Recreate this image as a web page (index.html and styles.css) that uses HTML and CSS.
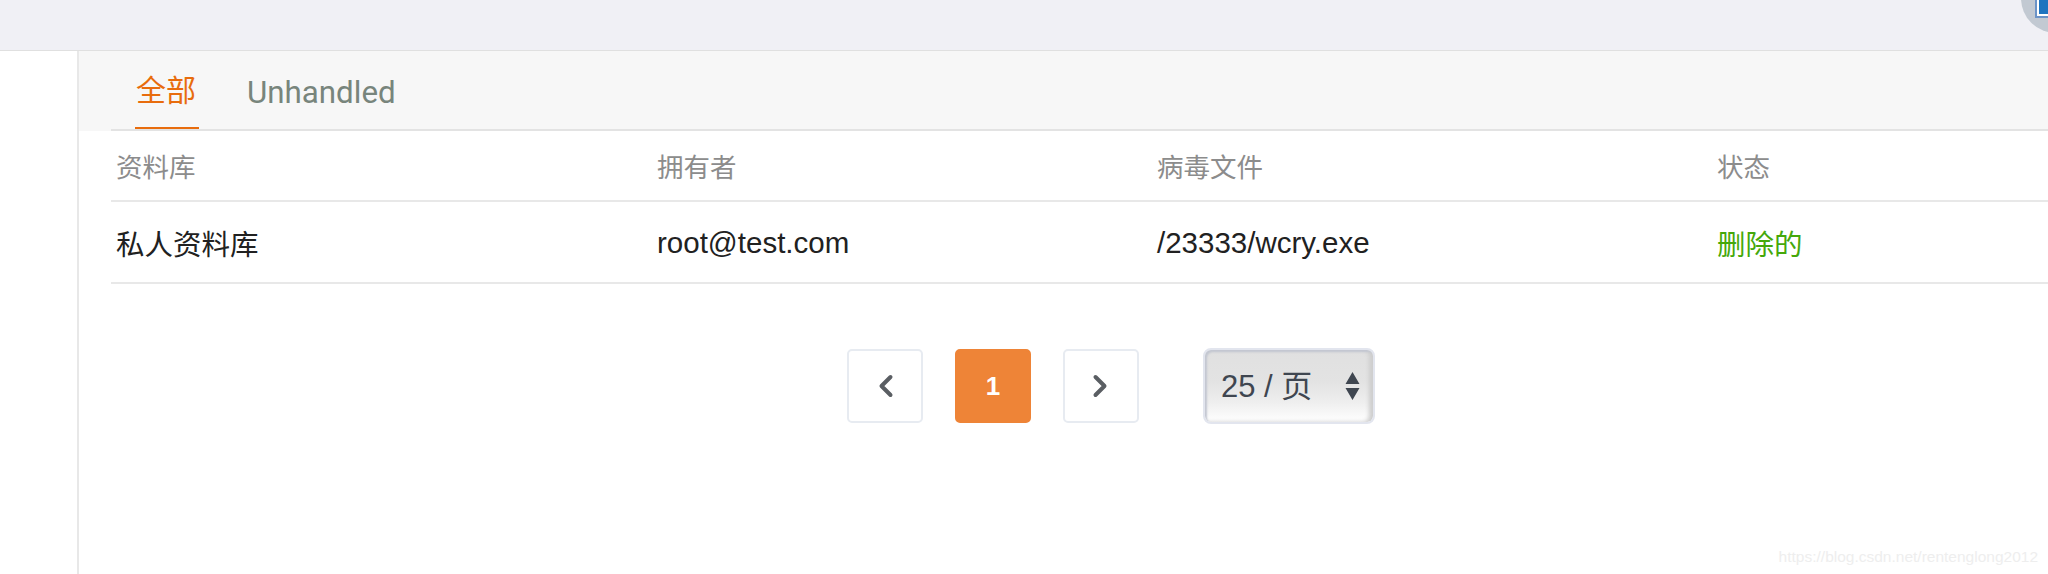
FILE: index.html
```html
<!DOCTYPE html>
<html lang="zh-CN">
<head>
    <meta charset="UTF-8">
    <meta name="viewport" content="width=device-width, initial-scale=1.0">
    <title>病毒扫描</title>
    <link rel="stylesheet" href="styles.css">
</head>
<body>
    <header class="top-bar">
        <div class="avatar"><span class="avatar-img"></span></div>
    </header>
    <div class="layout">
        <aside class="side-panel"></aside>
        <main class="content">
            <nav class="tabs">
                <a class="tab tab-active">全部</a>
                <a class="tab">Unhandled</a>
            </nav>
            <div class="table-wrap">
                <div class="table-row table-head">
                    <div>资料库</div>
                    <div>拥有者</div>
                    <div>病毒文件</div>
                    <div>状态</div>
                </div>
                <div class="table-row table-body">
                    <div class="cell-cjk">私人资料库</div>
                    <div class="cell-latin">root@test.com</div>
                    <div class="cell-latin">/23333/wcry.exe</div>
                    <div class="cell-cjk status-deleted">删除的</div>
                </div>
            </div>
            <div class="pager">
                <button class="page-btn">
                    <svg width="18" height="24" viewBox="0 0 18 24"><path d="M14.5 3 L5.5 12 L14.5 21" fill="none" stroke="#5a5e63" stroke-width="4" stroke-linecap="round" stroke-linejoin="round"/></svg>
                </button>
                <button class="page-btn page-current">1</button>
                <button class="page-btn">
                    <svg width="18" height="24" viewBox="0 0 18 24"><path d="M3.5 3 L12.5 12 L3.5 21" fill="none" stroke="#5a5e63" stroke-width="4" stroke-linecap="round" stroke-linejoin="round"/></svg>
                </button>
                <div class="per-page">
                    <span class="per-page-label">25 / 页</span>
                    <svg class="per-page-arrows" width="15" height="28" viewBox="0 0 15 28"><path d="M7.5 0 L14.5 12 H0.5 Z M0.5 16 H14.5 L7.5 28 Z" fill="#3f4650"/></svg>
                </div>
            </div>
            <div class="watermark">https://blog.csdn.net/rentenglong2012</div>
        </main>
    </div>
</body>
</html>
```

FILE: styles.css
```css
html, body {
    height: 100%;
}
body {
    margin: 0;
    height: 574px;
    overflow: hidden;
    background-color: #ffffff;
    font-family: "Liberation Sans", "Noto Sans CJK SC", sans-serif;
    color: #212529;
}
.top-bar {
    position: relative;
    height: 50px;
    background-color: #f0f0f5;
    border-bottom: 1px solid #e0e0e0;
    overflow: hidden;
}
.avatar {
    position: absolute;
    top: -37px;
    left: 2021px;
    width: 70px;
    height: 70px;
    border-radius: 50%;
    background-color: #c2c9d2;
}
.avatar-img {
    position: absolute;
    top: 0;
    left: 16px;
    width: 40px;
    height: 53px;
    box-sizing: border-box;
    background-color: #1f74bf;
    border: 2px solid #ffffff;
    outline: 2px solid #6b93c7;
}
.layout {
    display: flex;
    height: 523px;
}
.side-panel {
    width: 77px;
    flex-shrink: 0;
    border-right: 2px solid #e8e8e8;
}
.content {
    position: relative;
    flex: 1;
    min-width: 0;
}
.tabs {
    display: flex;
    box-sizing: border-box;
    height: 80px;
    padding-left: 56px;
    gap: 48px;
    background-color: #f7f7f7;
}
.tab {
    box-sizing: border-box;
    height: 78px;
    padding-top: 23px;
    font-family: Roboto, "Noto Sans CJK SC", sans-serif;
    font-size: 31.3px;
    line-height: 38px;
    color: #78857c;
}
.tab-active {
    padding: 21px 1px 0;
    width: 64px;
    font-size: 30px;
    color: #e86c0d;
    border-bottom: 2px solid #e86c0d;
}
.table-wrap {
    margin-left: 32px;
    border-top: 2px solid #e3e3e3;
    margin-top: -2px;
    position: relative;
}
.table-row {
    display: grid;
    grid-template-columns: 541px 500px 560px 1fr;
    padding-left: 5px;
    border-bottom: 2px solid #e8e8e8;
}
.table-head {
    height: 69px;
    align-items: center;
    font-size: 26.5px;
    color: #8c8c8c;
}
.table-body {
    align-items: center;
    padding-top: 2px;
    box-sizing: border-box;
    height: 82px;
    font-size: 28.5px;
    color: #212121;
}
.cell-cjk {
    margin-top: -2px;
}
.cell-latin {
    font-size: 29.5px;
}
.status-deleted {
    color: #45a80a;
}
.pager {
    display: flex;
    align-items: center;
    margin-top: 64px;
    padding-left: 768px;
}
.page-btn {
    display: flex;
    align-items: center;
    justify-content: center;
    box-sizing: border-box;
    flex-shrink: 0;
    width: 76px;
    height: 74px;
    margin-right: 32px;
    padding: 0;
    background-color: #ffffff;
    border: 2px solid #e7ebf1;
    border-radius: 5px;
}
.page-current {
    background-color: #ee8437;
    border-color: #ee8437;
    color: #ffffff;
    font-family: "Liberation Sans", sans-serif;
    font-size: 26px;
    font-weight: bold;
}
.per-page {
    display: flex;
    align-items: center;
    justify-content: space-between;
    box-sizing: border-box;
    flex-shrink: 0;
    width: 172px;
    height: 76px;
    margin-left: 32px;
    padding: 0 13px 0 16px;
    border: 2px solid #e2e5ee;
    border-radius: 8px;
    background: linear-gradient(#e0e0e0 0%, #e3e3e3 45%, #eeeeee 72%, #ffffff 100%);
    box-shadow: inset 2px 2px 2px #c3c7d1, inset -4px 0 4px #cdcdcd;
    font-size: 31px;
    color: #3f4650;
}
.per-page-label {
    margin-top: -5px;
}
.watermark {
    position: absolute;
    right: 10px;
    bottom: 8px;
    font-size: 15.5px;
    color: #eeeeee;
}
```
